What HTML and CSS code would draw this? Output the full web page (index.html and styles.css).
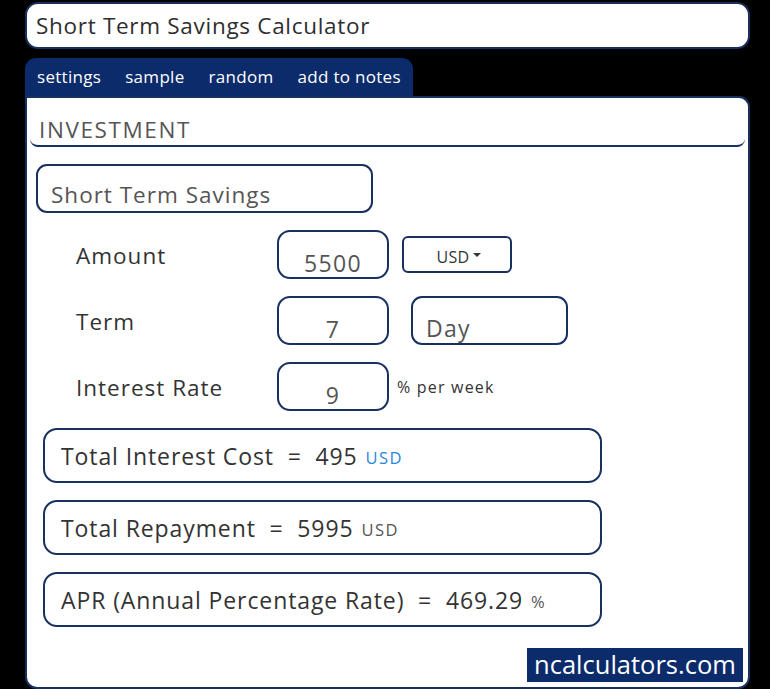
FILE: index.html
```html
<!DOCTYPE html>
<html lang="en">
<head>
<meta charset="utf-8">
<title>Short Term Savings Calculator</title>
<link rel="stylesheet" href="styles.css">
</head>
<body>
<div class="page">
  <div class="title-box">Short Term Savings Calculator</div>
  <div class="tabs">
    <span class="tab">settings</span>
    <span class="tab">sample</span>
    <span class="tab">random</span>
    <span class="tab">add to notes</span>
  </div>
  <div class="panel">
    <div class="section-head">INVESTMENT</div>
    <div class="calc-name">Short Term Savings</div>
    <div class="rows">
      <div class="row">
        <div class="label">Amount</div>
        <div class="num">5500</div>
        <div class="select">USD<span class="caret"></span></div>
      </div>
      <div class="row">
        <div class="label">Term</div>
        <div class="num">7</div>
        <div class="unit">Day</div>
      </div>
      <div class="row">
        <div class="label">Interest Rate</div>
        <div class="num">9</div>
        <div class="suffix">% per week</div>
      </div>
    </div>
    <div class="results">
      <div class="result">Total Interest Cost&nbsp; = &nbsp;495 <span class="res-unit blue">USD</span></div>
      <div class="result">Total Repayment&nbsp; = &nbsp;5995 <span class="res-unit">USD</span></div>
      <div class="result">APR (Annual Percentage Rate)&nbsp; = &nbsp;469.29 <span class="res-unit">%</span></div>
    </div>
    <div class="footer">
      <div class="brand">ncalculators.com</div>
    </div>
  </div>
</div>
</body>
</html>
```
FILE: styles.css
```css
* { box-sizing: border-box; }
html, body { margin: 0; padding: 0; background: #000; }
body { font-family: "Open Sans", "DejaVu Sans", sans-serif; color: #333; }

.page {
  width: 770px;
  height: 689px;
  padding: 2px 20px 0 25px;
  display: flex;
  flex-direction: column;
}

.title-box {
  height: 47px;
  background: #fff;
  border: 2px solid #17305f;
  border-radius: 13px;
  padding: 0 9px;
  font-size: 22.5px;
  line-height: 43px;
  color: #2e2e2e;
  letter-spacing: 0.7px;
}

.tabs {
  margin-top: 9px;
  align-self: flex-start;
  width: 388px;
  height: 40px;
  background: #0b2b6b;
  border-radius: 11px 11px 0 0;
  display: flex;
  align-items: center;
  padding: 0 0 4px 12px;
  white-space: nowrap;
}
.tab {
  color: #fff;
  font-size: 17px;
  margin-right: 24px;
  letter-spacing: 0.3px;
  flex-shrink: 0;
}
.tab:last-child { margin-right: 0; }

.panel {
  flex: 1;
  margin-top: -2px;
  background: #fff;
  border: 2px solid #17305f;
  border-radius: 0 11px 12px 12px;
  display: flex;
  flex-direction: column;
  padding: 0 3px 4px 3px;
}

.section-head {
  margin-top: 17px;
  padding-left: 9px;
  height: 32px;
  font-size: 22.5px;
  line-height: 30px;
  color: #555;
  border-bottom: 2px solid #17305f;
  border-radius: 0 0 8px 8px;
  letter-spacing: 1.6px;
}

.calc-name {
  margin: 17px 0 0 6px;
  width: 337px;
  height: 49px;
  border: 2px solid #17305f;
  border-radius: 11px;
  font-size: 22.5px;
  color: #555;
  padding: 14px 0 0 13px;
  line-height: 30px;
  letter-spacing: 1px;
}

.rows {
  margin-top: 17px;
  display: flex;
  flex-direction: column;
  gap: 17px;
}
.row {
  display: flex;
  align-items: center;
  height: 49px;
}
.label {
  width: 247px;
  padding-left: 46px;
  font-size: 22.5px;
  color: #333;
  margin-top: 2px;
  letter-spacing: 1px;
}
.num {
  width: 112px;
  height: 49px;
  border: 2px solid #17305f;
  border-radius: 13px;
  text-align: center;
  font-size: 23px;
  color: #555;
  padding-top: 16px;
  line-height: 30px;
  letter-spacing: 1.4px;
}
.select {
  margin-left: 13px;
  align-self: flex-start;
  margin-top: 6px;
  width: 110px;
  height: 37px;
  border: 2px solid #17305f;
  border-radius: 6px;
  display: flex;
  align-items: center;
  justify-content: center;
  font-size: 16px;
  color: #333;
  padding: 4px 0 0 4px;
  letter-spacing: 0.3px;
}
.caret {
  display: inline-block;
  margin-left: 4px;
  width: 0;
  height: 0;
  border-left: 4px solid transparent;
  border-right: 4px solid transparent;
  border-top: 4px solid #333;
  margin-bottom: 3px;
}
.unit {
  margin-left: 22px;
  width: 157px;
  height: 49px;
  border: 2px solid #17305f;
  border-radius: 11px;
  font-size: 23px;
  color: #555;
  padding: 15px 0 0 13px;
  line-height: 30px;
  letter-spacing: 1.3px;
}
.suffix {
  margin-left: 8px;
  margin-top: 0;
  font-size: 16px;
  color: #333;
  letter-spacing: 1.2px;
}

.results {
  margin-top: 17px;
  display: flex;
  flex-direction: column;
  gap: 17px;
  padding-left: 13px;
}
.result {
  width: 559px;
  height: 55px;
  border: 2px solid #17305f;
  border-radius: 14px;
  padding-left: 16px;
  display: flex;
  align-items: center;
  font-size: 23px;
  color: #333;
  letter-spacing: 0.9px;
  white-space: pre;
}
.res-unit {
  margin-left: 1px;
  font-size: 16.5px;
  color: #555;
  margin-top: 4px;
  letter-spacing: 1.5px;
}
.res-unit.blue { color: #2a86e0; }

.footer {
  margin-top: auto;
  display: flex;
  justify-content: flex-end;
  padding-right: 2px;
  padding-bottom: 1px;
}
.brand {
  width: 216px;
  height: 34px;
  background: #0b2b6b;
  color: #fff;
  font-size: 25.5px;
  line-height: 33px;
  text-align: center;
  letter-spacing: 0;
}
```
